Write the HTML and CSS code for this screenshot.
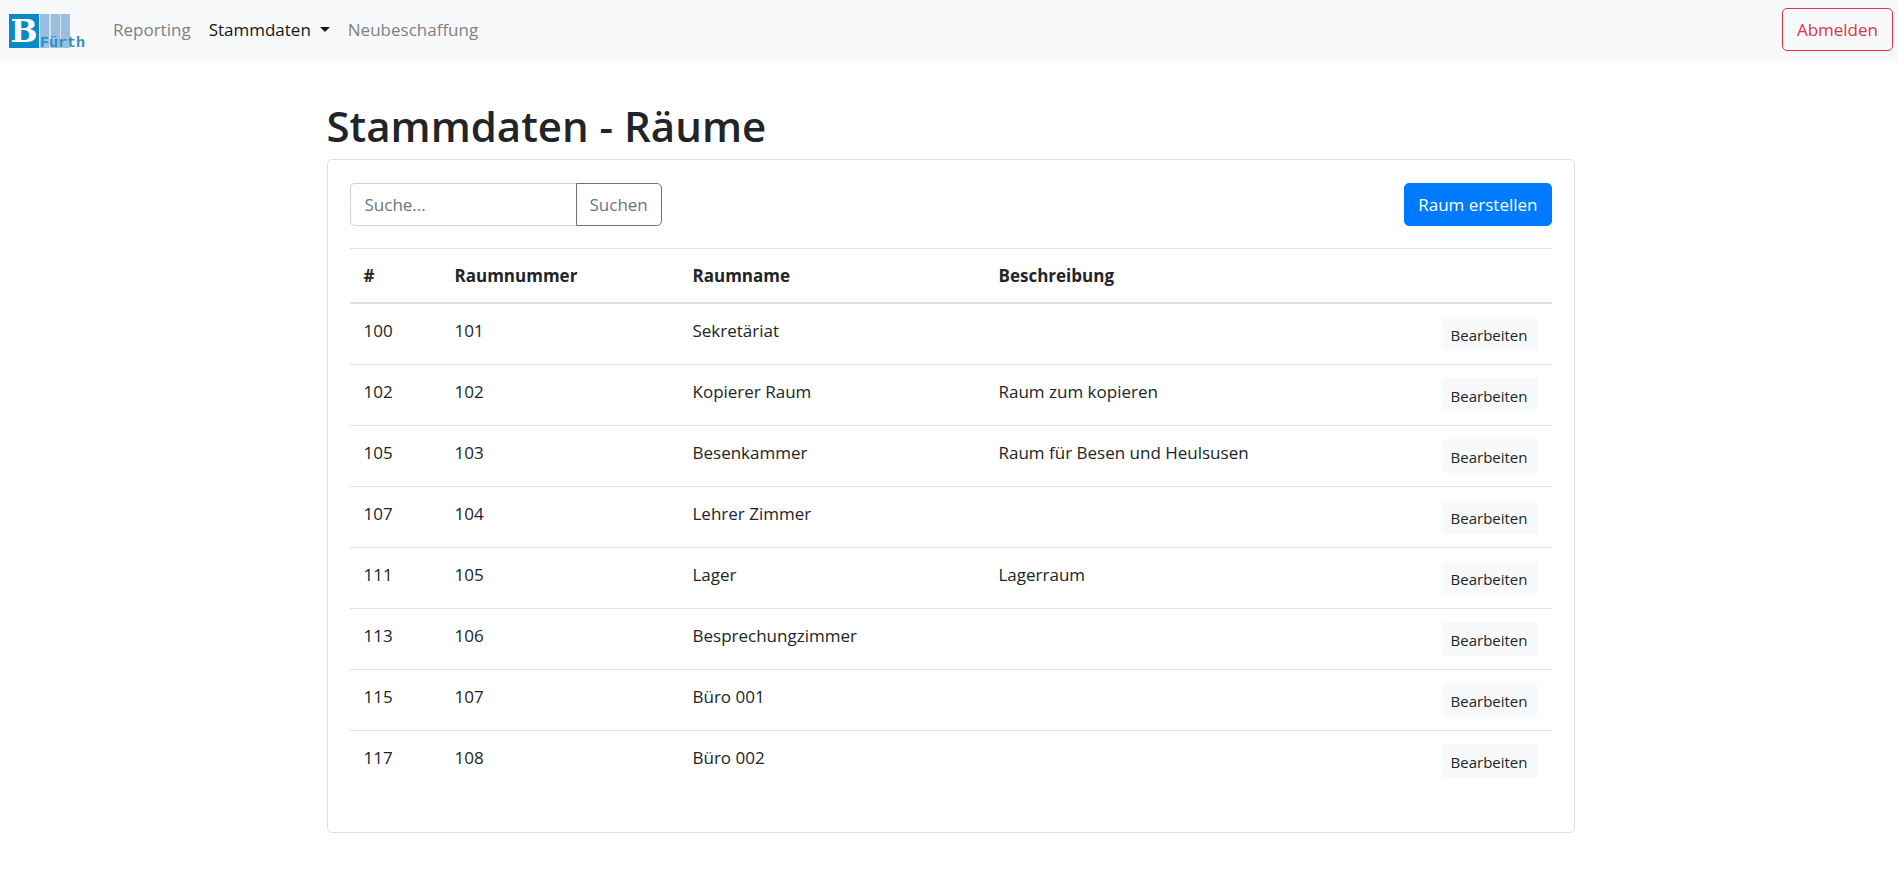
FILE: index.html
```html
<!DOCTYPE html>
<html lang="de">
<head>
<meta charset="utf-8">
<meta name="viewport" content="width=device-width, initial-scale=1">
<title>Stammdaten - Räume</title>
<link rel="stylesheet" href="styles.css">
</head>
<body>
<nav class="navbar">
  <a class="brand" href="#" aria-label="B Fürth">
    <svg class="logo" width="78" height="34" viewBox="0 0 78 34">
      <rect width="30" height="34" fill="#0a8ac4"/>
      <rect x="30" width="31" height="34" fill="#d3e2f1"/>
      <rect x="31" width="9" height="34" fill="#9bbde0"/>
      <rect x="42" width="9" height="34" fill="#9bbde0"/>
      <rect x="52" width="9" height="34" fill="#9bbde0"/>
      <text class="logo-letter" x="15" y="28" text-anchor="middle">B</text>
      <text class="logo-name" x="31" y="33">Fürth</text>
    </svg>
  </a>
  <ul class="nav-links">
    <li><a class="nav-link" href="#">Reporting</a></li>
    <li><a class="nav-link active dropdown" href="#">Stammdaten</a></li>
    <li><a class="nav-link" href="#">Neubeschaffung</a></li>
  </ul>
  <button class="btn btn-danger" type="button">Abmelden</button>
</nav>
<main class="container">
  <h1 class="title">Stammdaten - Räume</h1>
  <section class="card">
    <div class="toolbar">
      <form class="search">
        <input class="search-input" type="text" placeholder="Suche..." aria-label="Suche">
        <button class="btn btn-search" type="button">Suchen</button>
      </form>
      <button class="btn btn-primary" type="button">Raum erstellen</button>
    </div>
    <table class="table">
      <colgroup><col class="col-id"><col class="col-number"><col class="col-name"><col><col class="col-action"></colgroup>
      <thead>
        <tr><th>#</th><th>Raumnummer</th><th>Raumname</th><th>Beschreibung</th><th></th></tr>
      </thead>
      <tbody>
        <tr><td>100</td><td>101</td><td>Sekretäriat</td><td></td><td class="action"><button class="btn-sm" type="button">Bearbeiten</button></td></tr>
        <tr><td>102</td><td>102</td><td>Kopierer Raum</td><td>Raum zum kopieren</td><td class="action"><button class="btn-sm" type="button">Bearbeiten</button></td></tr>
        <tr><td>105</td><td>103</td><td>Besenkammer</td><td>Raum für Besen und Heulsusen</td><td class="action"><button class="btn-sm" type="button">Bearbeiten</button></td></tr>
        <tr><td>107</td><td>104</td><td>Lehrer Zimmer</td><td></td><td class="action"><button class="btn-sm" type="button">Bearbeiten</button></td></tr>
        <tr><td>111</td><td>105</td><td>Lager</td><td>Lagerraum</td><td class="action"><button class="btn-sm" type="button">Bearbeiten</button></td></tr>
        <tr><td>113</td><td>106</td><td>Besprechungzimmer</td><td></td><td class="action"><button class="btn-sm" type="button">Bearbeiten</button></td></tr>
        <tr><td>115</td><td>107</td><td>Büro 001</td><td></td><td class="action"><button class="btn-sm" type="button">Bearbeiten</button></td></tr>
        <tr><td>117</td><td>108</td><td>Büro 002</td><td></td><td class="action"><button class="btn-sm" type="button">Bearbeiten</button></td></tr>
      </tbody>
    </table>
  </section>
</main>
</body>
</html>
```
FILE: styles.css
```css
*, *::before, *::after { box-sizing: border-box; }

body {
  margin: 0;
  background: #fff;
  color: #212529;
  font: 400 17px/27px "Open Sans", "Noto Sans", sans-serif;
}

button, input { font: inherit; }

.navbar {
  display: flex;
  align-items: center;
  padding: 8px 6px 12px 9px;
  background: #f8f9fa;
}
.brand { display: flex; margin-right: 17px; padding-top: 3px; }
.logo { overflow: visible; }
.logo-letter { font: 700 32px "DejaVu Serif", serif; fill: #fff; }
.logo-name { font: 700 15px "Liberation Mono", monospace; fill: #2a8fc9; }
.nav-links {
  display: flex;
  flex: 1;
  margin: 0;
  padding: 0;
  list-style: none;
}
.nav-link {
  display: flex;
  align-items: center;
  padding: 8px 9px;
  color: #7f8081;
  text-decoration: none;
}
.nav-link.active { color: #161617; }
.dropdown::after {
  content: "";
  margin-left: 9px;
  border: 5px solid transparent;
  border-top-color: currentColor;
  border-bottom: 0;
}

.btn {
  padding: 7px 13px;
  border: 1px solid;
  border-radius: 5px;
  background: transparent;
  cursor: pointer;
}
.btn-danger { padding: 7px 14px; color: #dc3545; }
.btn-primary { border-color: #007bff; background: #007bff; color: #fff; }

.container {
  width: 100%;
  max-width: 1284px;
  margin: 36px auto 0;
  padding: 0 17px 0 19px;
}
.title { margin: 0 0 6px; font-size: 42px; font-weight: 600; line-height: 54px; }
.card {
  padding: 23px 22px 41px;
  border: 1px solid #dfdfdf;
  border-radius: 5px;
}
.toolbar { display: flex; justify-content: space-between; margin-bottom: 22px; }
.search { display: flex; }
.search-input {
  width: 226px;
  padding: 7px 14px;
  border: 1px solid #ced4da;
  border-right: 0;
  border-radius: 5px 0 0 5px;
  color: #495057;
}
.search-input::placeholder { color: #6c757d; opacity: 1; }
.btn-search { border-radius: 0 5px 5px 0; color: #6c757d; }

.table { width: 100%; border-spacing: 0; table-layout: fixed; }
.col-id { width: 91px; }
.col-number { width: 238px; }
.col-name { width: 306px; }
.col-action { width: 140px; }
.table th, .table td {
  padding: 13px 14px;
  border-top: 1px solid #dee2e6;
  text-align: left;
  vertical-align: top;
}
.table th { border-bottom: 2px solid #dee2e6; font-weight: 700; }
.table tbody tr:first-child td { border-top: 0; }
.table .action { text-align: right; }
.btn-sm {
  display: block;
  margin-left: auto;
  padding: 6px 9px 4px;
  border: 1px solid #f8f9fa;
  border-radius: 4px;
  background: #f8f9fa;
  color: #212529;
  font-size: 15px;
  line-height: 22px;
  cursor: pointer;
}
```
